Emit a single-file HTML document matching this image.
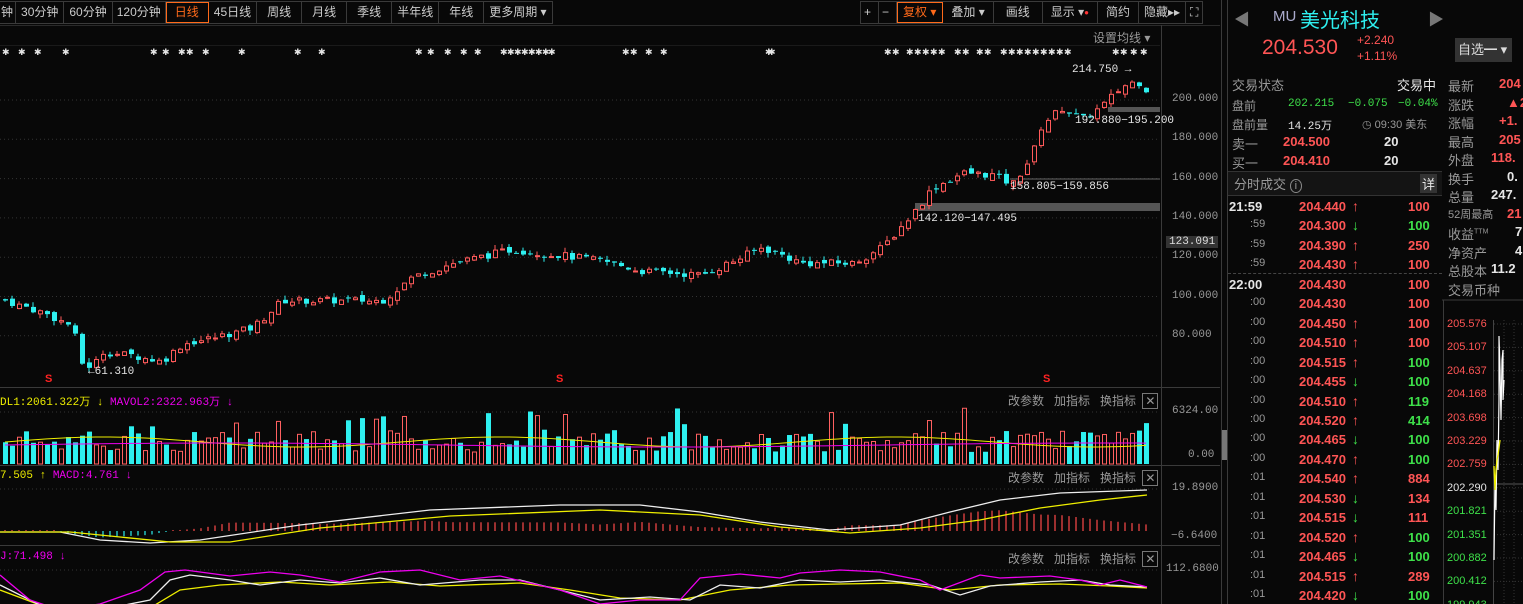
<!DOCTYPE html>
<html><head><meta charset="utf-8">
<style>
*{margin:0;padding:0;box-sizing:border-box}
html,body{width:1523px;height:604px;overflow:hidden}
body{background:#080808;font-family:"Liberation Sans","Noto Sans CJK SC",sans-serif;color:#ccc;position:relative;font-size:12px}
.a{position:absolute;white-space:nowrap}
.tb{position:absolute;top:1px;height:23px;border:1px solid #3a3a3a;display:flex;white-space:nowrap}
.tb div{border-right:1px solid #3a3a3a;padding:0 6px;line-height:21px;font-size:12px;color:#ccc;white-space:nowrap;flex:none}
.tb div:last-child{border-right:none}
.on{color:#ff6a1a!important;outline:1px solid #ff6a1a;outline-offset:-1px}
.r{color:#ff5555}.g{color:#3ee04a}.w{color:#e6e6e6}.gr{color:#999}
.mono{font-family:"Liberation Mono","DejaVu Sans Mono",monospace}
</style></head><body>
<div class="tb" style="left:-2px">
<div style="padding:0 2px">钟</div><div style="padding:0 5px">30分钟</div><div style="padding:0 5px">60分钟</div><div style="padding:0 4px">120分钟</div><div class="on" style="padding:0 9px">日线</div><div style="padding:0 5px">45日线</div><div style="padding:0 10px">周线</div><div style="padding:0 10px">月线</div><div style="padding:0 10px">季线</div><div style="padding:0 5px">半年线</div><div style="padding:0 10px">年线</div><div style="padding:0 5px">更多周期 ▾</div>
</div>
<div class="tb" style="left:860px">
<div style="width:18px;padding:0 3px">+</div><div style="width:18px;padding:0 3px">−</div><div class="on" style="padding:0 6px">复权 ▾</div><div style="padding:0 8px">叠加 ▾</div><div style="padding:0 12px">画线</div><div style="padding:0 8px">显示 ▾<span style="color:#f33;font-size:8px;vertical-align:top">●</span></div><div style="padding:0 8px">简约</div><div style="padding:0 5px">隐藏▸▸</div><div style="padding:0 4px">⛶</div>
</div>
<svg class="a" style="left:0;top:0" width="1523" height="604" id="s"></svg>
<div class="a gr" style="left:1093px;top:29px">设置均线 ▾</div>
<div class="a w" style="left:0;top:47px;font-size:13px;letter-spacing:0px" id="stars"></div>
<div class="a w mono" style="left:1072px;top:64px;font-size:11px">214.750 →</div>
<div class="a w mono" style="left:1075px;top:115px;font-size:11px">192.880−195.200</div>
<div class="a w mono" style="left:1010px;top:181px;font-size:11px">158.805−159.856</div>
<div class="a w mono" style="left:918px;top:213px;font-size:11px">142.120−147.495</div>
<div class="a w mono" style="left:88px;top:366px;font-size:11px">←61.310</div>
<div class="a" style="left:45px;top:373px;color:#f22;font-size:11px;font-weight:bold">S</div>
<div class="a" style="left:556px;top:373px;color:#f22;font-size:11px;font-weight:bold">S</div>
<div class="a" style="left:1043px;top:373px;color:#f22;font-size:11px;font-weight:bold">S</div>
<div class="mono" id="ax"></div>
<div class="a mono" style="left:1166px;top:236px;background:#333;color:#ddd;font-size:11px;padding:0 3px">123.091</div>
<div class="a mono" style="left:0;top:393px;font-size:11px"><span style="color:#ee0">DL1:2061.322万 ↓</span> <span style="color:#e0e">MAVOL2:2322.963万 ↓</span></div>
<div class="a mono" style="left:0;top:470px;font-size:11px"><span style="color:#ee0">7.505 ↑</span> <span style="color:#e0e">MACD:4.761 ↓</span></div>
<div class="a mono" style="left:0;top:551px;font-size:11px"><span style="color:#e0e">J:71.498 ↓</span></div>
<div class="a gr" style="left:1008px;top:392px;font-size:12px">改参数&nbsp;&nbsp; 加指标&nbsp;&nbsp; 换指标 <span style="border:1px solid #777;padding:0 2px;margin-left:3px">✕</span></div>
<div class="a gr" style="left:1008px;top:469px;font-size:12px">改参数&nbsp;&nbsp; 加指标&nbsp;&nbsp; 换指标 <span style="border:1px solid #777;padding:0 2px;margin-left:3px">✕</span></div>
<div class="a gr" style="left:1008px;top:550px;font-size:12px">改参数&nbsp;&nbsp; 加指标&nbsp;&nbsp; 换指标 <span style="border:1px solid #777;padding:0 2px;margin-left:3px">✕</span></div>
<div class="a mono gr" style="left:1172px;top:405px;font-size:11px">6324.00</div>
<div class="a mono gr" style="left:1188px;top:449px;font-size:11px">0.00</div>
<div class="a mono gr" style="left:1172px;top:482px;font-size:11px">19.8900</div>
<div class="a mono gr" style="left:1171px;top:530px;font-size:11px">−6.6400</div>
<div class="a mono gr" style="left:1166px;top:563px;font-size:11px">112.6800</div>
<div class="a" style="left:1234px;top:6px;color:#777;font-size:16px">◀</div>
<div class="a" style="left:1428px;top:6px;color:#777;font-size:16px">▶</div>
<div class="a" style="left:1273px;top:8px;color:#aac;font-size:15px">MU</div>
<div class="a" style="left:1300px;top:4px;color:#2ef0f0;font-size:20px">美光科技</div>
<div class="a r" style="left:1262px;top:36px;font-size:21px">204.530</div>
<div class="a r" style="left:1357px;top:33px;font-size:12px">+2.240</div>
<div class="a r" style="left:1357px;top:49px;font-size:12px">+1.11%</div>
<div class="a" style="left:1455px;top:38px;width:57px;height:24px;background:#333;color:#ddd;font-size:13px;line-height:24px;padding-left:3px">自选━ ▾</div>
<div class="a gr" style="left:1232px;top:75px;font-size:13px">交易状态</div>
<div class="a w" style="left:1397px;top:75px;font-size:13px">交易中</div>
<div class="a gr" style="left:1232px;top:97px">盘前</div>
<div class="a g mono" style="left:1288px;top:98px;font-size:11px">202.215</div>
<div class="a g mono" style="left:1348px;top:98px;font-size:11px">−0.075</div>
<div class="a g mono" style="left:1398px;top:98px;font-size:11px">−0.04%</div>
<div class="a gr" style="left:1232px;top:116px">盘前量</div>
<div class="a w mono" style="left:1288px;top:117px;font-size:11px">14.25万</div>
<div class="a gr" style="left:1362px;top:116px;font-size:11px">◷ 09:30 美东</div>
<div class="a gr" style="left:1232px;top:134px;font-size:13px">卖一</div>
<div class="a r" style="left:1283px;top:134px;font-size:13px;font-weight:bold">204.500</div>
<div class="a w" style="left:1384px;top:134px;font-size:13px;font-weight:bold">20</div>
<div class="a gr" style="left:1232px;top:153px;font-size:13px">买一</div>
<div class="a r" style="left:1283px;top:153px;font-size:13px;font-weight:bold">204.410</div>
<div class="a w" style="left:1384px;top:153px;font-size:13px;font-weight:bold">20</div>
<div class="a" style="left:1228px;top:171px;width:214px;height:25px;background:#141414;border-top:1px solid #333;border-bottom:1px solid #333"></div>
<div class="a gr" style="left:1234px;top:174px;font-size:13px">分时成交 <span style="border:1px solid #888;border-radius:50%;padding:0 4px;font-size:11px">i</span></div>
<div class="a w" style="left:1420px;top:174px;background:#333;font-size:13px;padding:0 2px">详</div>
<div id="ticks"></div>
<div id="rinfo"></div>
<div id="mini"></div>
<script>
const S=document.getElementById('s');let h='';
function L(x1,y1,x2,y2,c,w,d){h+=`<line x1="${x1}" y1="${y1}" x2="${x2}" y2="${y2}" stroke="${c}" stroke-width="${w||1}" ${d?'stroke-dasharray="'+d+'"':''}/>`}
function R(x,y,w,hh,f,st){h+=`<rect x="${x}" y="${y}" width="${w}" height="${hh}" fill="${f}" ${st?'stroke="'+st+'"':''}/>`}
L(0,25.5,1220,25.5,'#2a2a2a');L(0,45.5,1160,45.5,'#1a1a1a');
L(1161.5,25,1161.5,604,'#3a3a3a');L(1221.5,0,1221.5,604,'#3a3a3a');L(1227.5,0,1227.5,604,'#3a3a3a');
L(0,387.5,1220,387.5,'#3a3a3a');L(0,465.5,1220,465.5,'#3a3a3a');L(0,545.5,1220,545.5,'#3a3a3a');
R(1222,430,5,30,'#777');
const ax=document.getElementById('ax');let axh='';
[200,180,160,140,120,100,80].forEach(p=>{let y=100+(200-p)*1.965;L(0,y,1160,y,'#333',1,'1 3');axh+=`<div class="a gr" style="left:1172px;top:${y-7}px;font-size:11px">${p.toFixed(3)}</div>`;});
ax.innerHTML=axh;
L(0,412,1160,412,'#333',1,'1 3');L(0,489,1160,489,'#333',1,'1 3');L(0,570,1160,570,'#333',1,'1 3');
R(1108,107,52,5,'#555');R(915,203,245,8,'#555');L(1010,179,1160,179,'#666',1);
const wp=[[3,98],[40,92],[70,85],[80,66],[90,64],[100,72],[130,70],[160,67],[180,76],[210,79],[250,84],[280,98],[330,98],[380,98],[410,110],[450,117],[510,124],[560,121],[600,118],[640,113],[700,111],[730,118],[760,125],[800,117],[850,117],[880,125],[910,142],[930,155],[960,163],[990,162],[1010,157],[1030,172],[1040,188],[1060,196],[1080,190],[1100,197],[1120,207],[1135,210],[1147,204]];
function P(x){for(let i=1;i<wp.length;i++)if(x<=wp[i][0]){let a=wp[i-1],b=wp[i];return a[1]+(b[1]-a[1])*(x-a[0])/(b[0]-a[0]);}return 204}
let seed=7;function rnd(){seed=(seed*9301+49297)%233280;return seed/233280}
const Y=p=>100+(200-p)*1.965;
let prev=P(0);const n=164;let closes=[];
for(let i=0;i<n;i++){let x=3+i*7;let c=P(x)+(rnd()-0.5)*4;let o=prev+(rnd()-0.5)*2.5;let up=c>=o;
let hi=Math.max(o,c)+rnd()*2.5,lo=Math.min(o,c)-rnd()*2.5;
let col=up?'#ff5a5a':'#2ef0f0';L(x+2,Y(hi),x+2,Y(lo),col);
let top=Y(Math.max(o,c)),bh=Math.max(1,Math.abs(Y(o)-Y(c)));
if(up)R(x+0.5,top+0.5,4,bh,'#080808',col);else R(x,top,5,bh,col);
closes.push(c);prev=c;
let v=12+rnd()*22+(rnd()<0.1?22:0);
if(up)R(x+0.5,464-v,4,v,'none','#ff6060');else R(x,464-v,5,v,'#2ef0f0');
}
let p1='',p2='';for(let i=0;i<n;i++){let x=5+i*7;p1+=`${x},${442-5*Math.sin(i/9)} `;p2+=`${x},${445-2*Math.sin(i/20)} `}
h+=`<polyline points="${p1}" fill="none" stroke="#ee0"/><polyline points="${p2}" fill="none" stroke="#e0e"/>`;
const mw=[[0,532],[60,532],[100,540],[150,543],[200,540],[300,525],[430,510],[560,505],[640,505],[700,512],[760,522],[830,530],[900,525],[950,512],[1000,500],[1060,493],[1147,490]];
const mw2=[[0,532],[70,532],[120,537],[170,542],[230,542],[320,528],[450,516],[600,510],[700,515],[780,527],[850,533],[920,528],[980,520],[1040,508],[1100,500],[1147,495]];
function pl(arr,c){let s='';arr.forEach(p=>s+=p[0]+','+p[1]+' ');h+=`<polyline points="${s}" fill="none" stroke="${c}" stroke-width="1.3"/>`}
function interp(arr,x){for(let i=1;i<arr.length;i++)if(x<=arr[i][0]){let a=arr[i-1],b=arr[i];return a[1]+(b[1]-a[1])*(x-a[0])/(b[0]-a[0]);}return arr[arr.length-1][1]}
for(let i=0;i<n;i++){let x=5+i*7;let d=interp(mw2,x)-interp(mw,x);let bar=d*1.3;if(Math.abs(bar)<1)bar=bar<0?-1:1;
L(x,531,x,531-bar,bar>0?'#ff4a4a':'#2ef0f0',1.2);}
pl(mw,'#eee');pl(mw2,'#ee0');
const k1=[[0,585],[30,600],[50,610],[100,610],[150,600],[170,580],[190,575],[230,580],[260,585],[300,580],[340,583],[380,578],[420,585],[480,580],[520,580],[560,590],[600,600],[650,597],[690,600],[720,585],[760,588],[800,580],[840,582],[880,580],[930,585],[960,595],[990,586],[1040,582],[1080,580],[1110,585],[1147,587]];
const k2=[[0,590],[40,605],[100,615],[150,608],[180,590],[220,585],[280,582],[330,585],[390,582],[440,586],[520,583],[570,590],[620,598],[680,600],[730,590],[790,585],[840,584],[900,583],[950,590],[1000,585],[1060,584],[1110,586],[1147,588]];
const k3=[[0,575],[30,600],[60,610],[100,604],[140,590],[165,572],[185,570],[230,576],[270,572],[300,575],[340,582],[380,572],[420,570],[460,580],[500,576],[560,590],[600,604],[640,600],[680,600],[700,578],[740,574],[780,578],[800,573],[840,570],[880,572],[920,580],[940,590],[980,575],[1000,578],[1050,576],[1080,580],[1100,585],[1120,580],[1147,587]];
pl(k2,'#ee0');pl(k1,'#eee');pl(k3,'#e0e');
L(1493.5,320,1493.5,604,'#444');L(1443.5,300,1443.5,604,'#3a3a3a');L(1442,300,1523,300,'#3a3a3a');
for(let i=0;i<12;i++){let y=324+i*23.4;L(1494,y,1523,y,'#333',1,'1 2');}
for(let x of[1504,1514]) L(x,320,x,604,'#333',1,'1 2');
L(1494,484,1523,484,'#555',1);
h+=`<polyline points="1494,560 1495,480 1496,510 1497,440 1498,470 1499,400 1499,336 1500,370 1501,420 1502,360 1503,350 1503,400 1504,380" fill="none" stroke="#fff" stroke-width="1.2"/>`;
h+=`<polyline points="1494,466 1495,490 1496,470 1497,460 1498,455 1499,448 1500,440" fill="none" stroke="#ee0" stroke-width="1.3"/>`;
S.innerHTML=h;
const st=document.getElementById('stars');let sh='';
[2,18,34,62,150,162,178,186,202,238,294,318,415,427,444,460,474,500,507,514,521,528,535,542,548,622,630,645,660,765,768,884,892,906,914,922,930,938,954,962,976,984,1000,1008,1016,1024,1032,1040,1048,1056,1064,1112,1120,1130,1140].forEach(x=>sh+=`<span class="a" style="left:${x}px;top:0">✱</span>`);
st.innerHTML=sh;st.style.fontSize='9px';
const T=[["21:59","204.440","u","100","r"],[":59","204.300","d","100","g"],[":59","204.390","u","250","r"],[":59","204.430","u","100","r"],["22:00","204.430","","100","r"],[":00","204.430","","100","r"],[":00","204.450","u","100","r"],[":00","204.510","u","100","r"],[":00","204.515","u","100","g"],[":00","204.455","d","100","g"],[":00","204.510","u","119","g"],[":00","204.520","u","414","g"],[":00","204.465","d","100","g"],[":00","204.470","u","100","g"],[":01","204.540","u","884","r"],[":01","204.530","d","134","r"],[":01","204.515","d","111","r"],[":01","204.520","u","100","g"],[":01","204.465","d","100","g"],[":01","204.515","u","289","r"],[":01","204.420","d","100","g"]];
let th='';T.forEach((t,i)=>{let y=199+i*19.45;let big=t[0].length>3;
th+=`<div class="a ${big?'w':'gr'}" style="left:${big?1229:1250}px;top:${y}px;font-size:${big?13:11}px;font-weight:${big?'bold':'normal'}">${t[0]}</div>`;
th+=`<div class="a r" style="left:1299px;top:${y}px;font-size:13px;font-weight:bold">${t[1]}</div>`;
if(t[2])th+=`<div class="a ${t[2]=='u'?'r':'g'}" style="left:1352px;top:${y-1}px;font-size:14px;font-weight:bold">${t[2]=='u'?'↑':'↓'}</div>`;
th+=`<div class="a ${t[4]}" style="left:1408px;top:${y}px;font-size:13px;font-weight:bold">${t[3]}</div>`;});
th+=`<div class="a" style="left:1228px;top:273px;width:214px;border-top:1px dashed #444"></div>`;
document.getElementById('ticks').innerHTML=th;
const RI=[["最新","204","r"],["涨跌","▲2","r"],["涨幅","+1.","r"],["最高","205","r"],["外盘","118.","r"],["换手","0.","w"],["总量","247.","w"],["52周最高","21","r"],["收益<sup style='font-size:7px'>TTM</sup>","7","w"],["净资产","4","w"],["总股本","11.2","w"],["交易币种","","w"]];
let rh='';RI.forEach((r,i)=>{let y=76+i*18.5;rh+=`<div class="a gr" style="left:1448px;top:${y}px;font-size:${i==7?11:13}px">${r[0]}</div><div class="a ${r[2]}" style="left:${1523-r[1].length*8}px;top:${y}px;font-size:13px;font-weight:bold">${r[1]}</div>`});
document.getElementById('rinfo').innerHTML=rh;
const MV=["205.576","205.107","204.637","204.168","203.698","203.229","202.759","202.290","201.821","201.351","200.882","200.412","199.943"];
let mh='';MV.forEach((v,i)=>{let y=318+i*23.4;mh+=`<div class="a ${i<7?'r':i==7?'w':'g'}" style="left:1447px;top:${y}px;font-size:11px">${v}</div>`});
document.getElementById('mini').innerHTML=mh;
</script>
</body></html>
